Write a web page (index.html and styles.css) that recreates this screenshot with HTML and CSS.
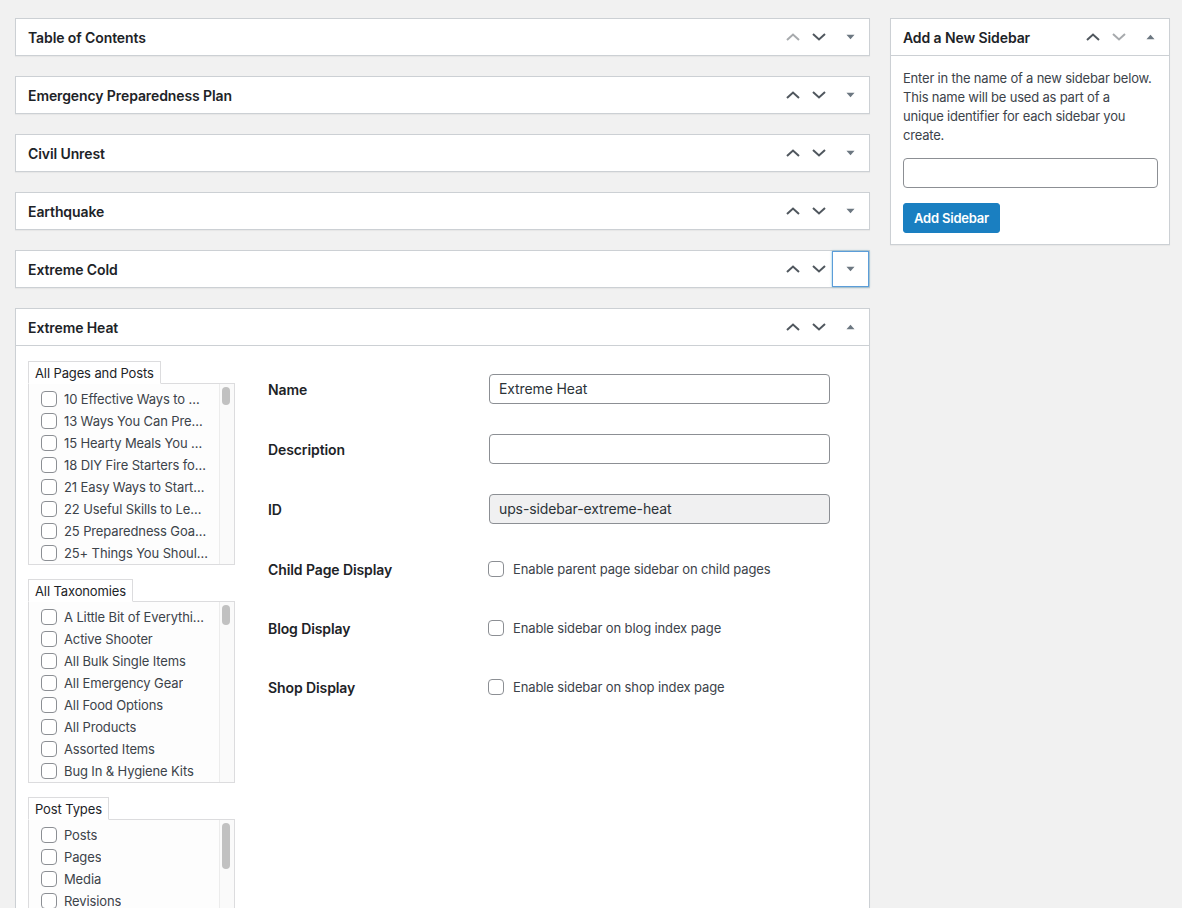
FILE: index.html
```html
<!DOCTYPE html>
<html>
<head>
<meta charset="utf-8">
<link rel="stylesheet" href="styles.css">
</head>
<body>
<svg width="0" height="0" class="defs">
  <defs>
    <symbol id="up" viewBox="0 0 14 8"><path d="M1 7 L7 1.5 L13 7" fill="none" stroke="currentColor" stroke-width="2"/></symbol>
    <symbol id="down" viewBox="0 0 14 8"><path d="M1 1 L7 6.5 L13 1" fill="none" stroke="currentColor" stroke-width="2"/></symbol>
    <symbol id="tri-down" viewBox="0 0 10 6"><path d="M0.5 0.5 H9.5 L5 5.5 Z" fill="currentColor"/></symbol>
    <symbol id="tri-up" viewBox="0 0 10 6"><path d="M0.5 5.5 H9.5 L5 0.5 Z" fill="currentColor"/></symbol>
  </defs>
</svg>
<div class="page">
  <div class="main-col">
    <div class="postbox">
      <div class="postbox-header">
        <h2 class="hndle">Table of Contents</h2>
        <div class="handle-actions">
          <span class="btn-order disabled"><svg class="chev"><use href="#up"/></svg></span>
          <span class="btn-order"><svg class="chev"><use href="#down"/></svg></span>
          <span class="btn-toggle"><svg class="tri"><use href="#tri-down"/></svg></span>
        </div>
      </div>
    </div>
    <div class="postbox">
      <div class="postbox-header">
        <h2 class="hndle">Emergency Preparedness Plan</h2>
        <div class="handle-actions">
          <span class="btn-order"><svg class="chev"><use href="#up"/></svg></span>
          <span class="btn-order"><svg class="chev"><use href="#down"/></svg></span>
          <span class="btn-toggle"><svg class="tri"><use href="#tri-down"/></svg></span>
        </div>
      </div>
    </div>
    <div class="postbox">
      <div class="postbox-header">
        <h2 class="hndle">Civil Unrest</h2>
        <div class="handle-actions">
          <span class="btn-order"><svg class="chev"><use href="#up"/></svg></span>
          <span class="btn-order"><svg class="chev"><use href="#down"/></svg></span>
          <span class="btn-toggle"><svg class="tri"><use href="#tri-down"/></svg></span>
        </div>
      </div>
    </div>
    <div class="postbox">
      <div class="postbox-header">
        <h2 class="hndle">Earthquake</h2>
        <div class="handle-actions">
          <span class="btn-order"><svg class="chev"><use href="#up"/></svg></span>
          <span class="btn-order"><svg class="chev"><use href="#down"/></svg></span>
          <span class="btn-toggle"><svg class="tri"><use href="#tri-down"/></svg></span>
        </div>
      </div>
    </div>
    <div class="postbox">
      <div class="postbox-header">
        <h2 class="hndle">Extreme Cold</h2>
        <div class="handle-actions">
          <span class="btn-order"><svg class="chev"><use href="#up"/></svg></span>
          <span class="btn-order"><svg class="chev"><use href="#down"/></svg></span>
          <span class="btn-toggle focused"><svg class="tri"><use href="#tri-down"/></svg></span>
        </div>
      </div>
    </div>
    <div class="postbox open">
      <div class="postbox-header">
        <h2 class="hndle">Extreme Heat</h2>
        <div class="handle-actions">
          <span class="btn-order"><svg class="chev"><use href="#up"/></svg></span>
          <span class="btn-order"><svg class="chev"><use href="#down"/></svg></span>
          <span class="btn-toggle"><svg class="tri"><use href="#tri-up"/></svg></span>
        </div>
      </div>
      <div class="inside">
        <div class="conditions">
          <div class="cond-group">
            <div class="tab">All Pages and Posts</div>
            <div class="list">
              <ul class="items">
                <li><span class="cb"></span><span class="lbl">10 Effective Ways to …</span></li>
                <li><span class="cb"></span><span class="lbl">13 Ways You Can Pre…</span></li>
                <li><span class="cb"></span><span class="lbl">15 Hearty Meals You …</span></li>
                <li><span class="cb"></span><span class="lbl">18 DIY Fire Starters fo…</span></li>
                <li><span class="cb"></span><span class="lbl">21 Easy Ways to Start…</span></li>
                <li><span class="cb"></span><span class="lbl">22 Useful Skills to Le…</span></li>
                <li><span class="cb"></span><span class="lbl">25 Preparedness Goa…</span></li>
                <li><span class="cb"></span><span class="lbl">25+ Things You Shoul…</span></li>
              </ul>
              <div class="scroll-track"><div class="thumb thumb-a"></div></div>
            </div>
          </div>
          <div class="cond-group">
            <div class="tab">All Taxonomies</div>
            <div class="list">
              <ul class="items">
                <li><span class="cb"></span><span class="lbl">A Little Bit of Everythi…</span></li>
                <li><span class="cb"></span><span class="lbl">Active Shooter</span></li>
                <li><span class="cb"></span><span class="lbl">All Bulk Single Items</span></li>
                <li><span class="cb"></span><span class="lbl">All Emergency Gear</span></li>
                <li><span class="cb"></span><span class="lbl">All Food Options</span></li>
                <li><span class="cb"></span><span class="lbl">All Products</span></li>
                <li><span class="cb"></span><span class="lbl">Assorted Items</span></li>
                <li><span class="cb"></span><span class="lbl">Bug In &amp; Hygiene Kits</span></li>
              </ul>
              <div class="scroll-track"><div class="thumb thumb-b"></div></div>
            </div>
          </div>
          <div class="cond-group">
            <div class="tab">Post Types</div>
            <div class="list">
              <ul class="items">
                <li><span class="cb"></span><span class="lbl">Posts</span></li>
                <li><span class="cb"></span><span class="lbl">Pages</span></li>
                <li><span class="cb"></span><span class="lbl">Media</span></li>
                <li><span class="cb"></span><span class="lbl">Revisions</span></li>
                <li><span class="cb"></span><span class="lbl">Navigation Menu Items</span></li>
                <li><span class="cb"></span><span class="lbl">Custom CSS</span></li>
                <li><span class="cb"></span><span class="lbl">Changesets</span></li>
                <li><span class="cb"></span><span class="lbl">Products</span></li>
              </ul>
              <div class="scroll-track"><div class="thumb thumb-c"></div></div>
            </div>
          </div>
        </div>
        <div class="settings">
          <div class="row">
            <div class="label">Name</div>
            <div class="input">Extreme Heat</div>
          </div>
          <div class="row">
            <div class="label">Description</div>
            <div class="input"></div>
          </div>
          <div class="row">
            <div class="label">ID</div>
            <div class="input readonly">ups-sidebar-extreme-heat</div>
          </div>
          <div class="row check-row">
            <div class="label">Child Page Display</div>
            <div class="check"><span class="cb"></span><span>Enable parent page sidebar on child pages</span></div>
          </div>
          <div class="row check-row">
            <div class="label">Blog Display</div>
            <div class="check"><span class="cb"></span><span>Enable sidebar on blog index page</span></div>
          </div>
          <div class="row check-row">
            <div class="label">Shop Display</div>
            <div class="check"><span class="cb"></span><span>Enable sidebar on shop index page</span></div>
          </div>
        </div>
      </div>
    </div>
  </div>
  <div class="side-col">
    <div class="postbox">
      <div class="postbox-header">
        <h2 class="hndle">Add a New Sidebar</h2>
        <div class="handle-actions">
          <span class="btn-order"><svg class="chev"><use href="#up"/></svg></span>
          <span class="btn-order disabled"><svg class="chev"><use href="#down"/></svg></span>
          <span class="btn-toggle"><svg class="tri"><use href="#tri-up"/></svg></span>
        </div>
      </div>
      <div class="side-inside">
        <p class="desc">Enter in the name of a new sidebar below. This name will be used as part of a unique identifier for each sidebar you create.</p>
        <div class="input side-input"></div>
        <span class="button-primary">Add Sidebar</span>
      </div>
    </div>
  </div>
</div>
</body>
</html>
```

FILE: styles.css
```css
* { box-sizing: border-box; }
html, body { margin: 0; }
body {
  background: #f1f1f1;
  font-family: Inter, "Noto Sans", "Liberation Sans", sans-serif;
  font-size: 13px;
  letter-spacing: -0.12px;
  color: #3c434a;
  padding: 18px 12px 0 15px;
  overflow: hidden;
  height: 908px;
}
.defs { position: absolute; width: 0; height: 0; }
.page { display: flex; gap: 20px; align-items: flex-start; }
.main-col { width: 855px; display: flex; flex-direction: column; gap: 20px; }
.side-col { width: 280px; }

.postbox { background: #fff; border: 1px solid #ccd0d4; box-shadow: 0 1px 1px rgba(0,0,0,0.04); }
.postbox-header { display: flex; align-items: center; height: 36px; }
.postbox.open .postbox-header, .side-col .postbox-header { border-bottom: 1px solid #ccd0d4; height: 37px; }
.hndle { flex: 1; margin: 0; padding: 0 12px; font-size: 14px; font-weight: 600; color: #1d2327; letter-spacing: -0.1px; }
.handle-actions { display: flex; align-items: center; height: 100%; }
.btn-order { width: 26px; height: 36px; display: flex; align-items: center; justify-content: center; color: #50575e; }
.btn-order.disabled { color: #a7aaad; }
.chev { width: 14px; height: 8px; }
.btn-toggle { width: 37px; height: 36px; display: flex; align-items: center; justify-content: center; color: #6c7781; border: 1px solid transparent; }
.btn-toggle.focused { border-color: #5b9dd9; box-shadow: 0 0 2px rgba(30,140,190,0.6); }
.tri { width: 9px; height: 6px; }

.inside { display: flex; padding: 15px 12px 0 12px; height: 600px; }
.conditions { width: 207px; display: flex; flex-direction: column; gap: 14px; }
.tab { display: inline-block; align-self: flex-start; height: 23px; line-height: 22px; padding: 0 6px; border: 1px solid #dcdcde; border-bottom-color: #fff; background: #fff; color: #1d2327; position: relative; z-index: 1; margin-bottom: -1px; }
.cond-group { display: flex; flex-direction: column; }
.list { display: flex; height: 182px; border: 1px solid #dcdcde; background: #fdfdfd; overflow: hidden; }
.items { list-style: none; margin: 0; padding: 4px 0 0 12px; flex: 1; min-width: 0; }
.items li { display: flex; align-items: center; height: 22px; gap: 7px; white-space: nowrap; color: #3c434a; }
.lbl { overflow: hidden; }
.cb { flex: none; width: 16px; height: 16px; border: 1px solid #8c8f94; border-radius: 4px; background: #fff; display: inline-block; }
.scroll-track { flex: none; width: 15px; border-left: 1px solid #ececec; background: #fafafa; padding: 3px 0 0 2px; }
.thumb { width: 8px; background: #c1c1c1; border-radius: 4px; }
.thumb-a { height: 18px; }
.thumb-b { height: 20px; }
.thumb-c { height: 46px; }

.settings { margin-left: 33px; padding-top: 13px; display: flex; flex-direction: column; }
.row { display: flex; align-items: center; height: 30px; margin-bottom: 30px; }
.row.check-row { height: 30px; margin-bottom: 29px; }
.label { width: 221px; font-size: 14px; font-weight: 600; color: #1d2327; letter-spacing: -0.1px; }
.input { width: 341px; height: 30px; border: 1px solid #8c8f94; border-radius: 4px; background: #fff; font-size: 14px; line-height: 28px; padding: 0 9px; color: #2c3338; }
.input.readonly { background: #f0f0f1; }
.check { display: flex; align-items: center; gap: 9px; color: #3c434a; margin-left: -1px; }

.side-inside { padding: 13px 12px 11px 12px; }
.desc { margin: 0 0 13px 0; line-height: 19px; color: #3c434a; letter-spacing: -0.2px; width: 250px; }
.side-input { width: 255px; margin-bottom: 15px; }
.button-primary { display: inline-block; height: 30px; line-height: 28px; padding: 0 10px; background: #1a7fc1; border: 1px solid #1a7fc1; border-radius: 3px; color: #fff; font-weight: 600; font-size: 13px; letter-spacing: -0.2px; }
```
